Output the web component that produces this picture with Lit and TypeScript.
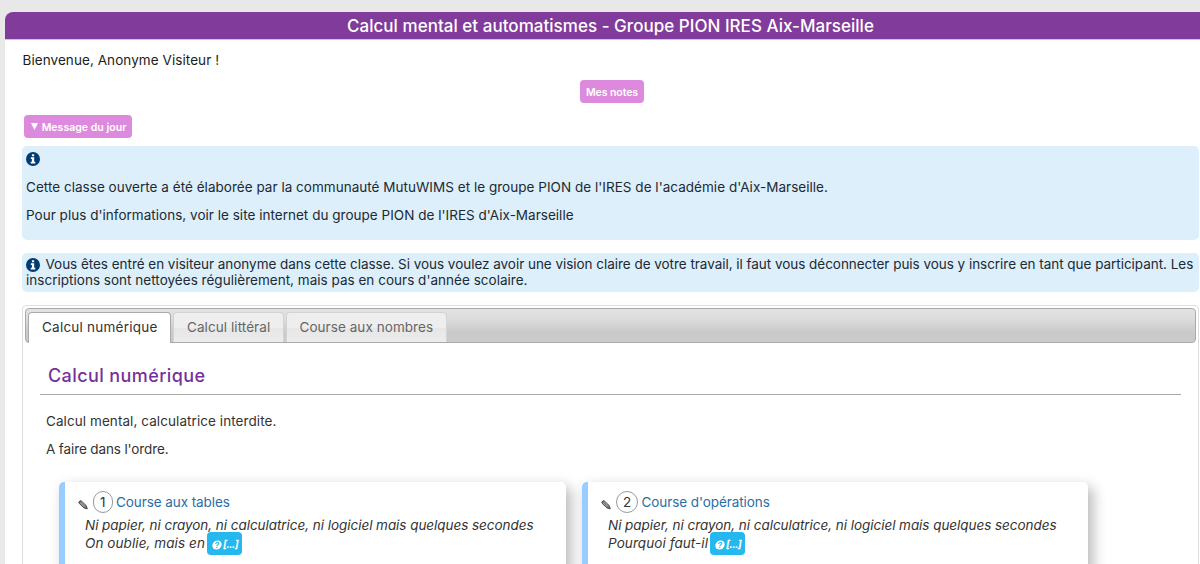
import { LitElement, html, css, svg } from "lit";

interface Exercise {
  num: number;
  title: string;
  line1: string;
  line2: string;
  tone: string;
}

const exercises: Exercise[] = [
  {
    num: 1,
    title: "Course aux tables",
    line1: "Ni papier, ni crayon, ni calculatrice, ni logiciel mais quelques secondes",
    line2: "On oublie, mais en",
    tone: "first",
  },
  {
    num: 2,
    title: "Course d'opérations",
    line1: "Ni papier, ni crayon, ni calculatrice, ni logiciel mais quelques secondes",
    line2: "Pourquoi faut-il",
    tone: "second",
  },
];

const infoIcon = html`<svg class="info" viewBox="0 0 14 14">
  <circle cx="7" cy="7" r="7" fill="#003c72"></circle>
  ${svg`<path fill="#fff" d="M5.9 2.2h2.3v2H5.9zM4.8 5.3h3.4v4.5h1.1v1.6H4.7V9.8h1.2V6.9H4.8z"/>`}
</svg>`;

const pencilIcon = html`<svg class="pencil" viewBox="0 0 10 10">
  <path d="M1.1 1.6 2.9.5 8.2 5.6 9.3 8.9 5.9 7.9.8 3z" fill="#777" stroke="#333" stroke-width=".8" stroke-linejoin="round"></path>
  <path d="M2 2.8 6.2 7M3.2 1.8 7.4 5.9" stroke="#ccc" stroke-width=".6" fill="none"></path>
</svg>`;

const questionIcon = html`<svg class="question" viewBox="0 0 10 10">
  <g transform="skewX(-8) translate(.7 0)">
    <circle cx="5" cy="5" r="4.6" fill="#fff"></circle>
    <path d="M3.5 4C3.5 2 6.7 2.1 6.5 3.8 6.4 4.8 5.1 4.7 5.1 5.9M5.1 6.7v1.2" fill="none" stroke="#25b8ee" stroke-width="1.2"></path>
  </g>
</svg>`;

class AppRoot extends LitElement {
  static styles = css`
    :host {
      display: block;
      box-sizing: border-box;
      height: 564px;
      overflow: hidden;
      padding: 12px 0 0 5px;
      background: #e8e8e8;
      color: #1c1c1c;
      font: 400 13.5px/16px Inter, "Open Sans", sans-serif;
    }
    * { box-sizing: border-box; }
    p { margin: 0; }
    .page { height: 560px; background: #fff; border-top-left-radius: 8px; }
    header {
      height: 27px;
      padding-left: 16px;
      background: #813b9a;
      box-shadow: 0 1px #ddb9e6;
      border-top-left-radius: 8px;
      color: #fff;
      font: 450 17px/28px Inter, sans-serif;
      letter-spacing: 0.03px;
      text-align: center;
      white-space: nowrap;
    }
    main { padding: 13px 1px 0 17px; }
    .welcome { padding-left: 0.5px; letter-spacing: 0.07px; }
    .btn {
      display: flex;
      align-items: center;
      justify-content: center;
      height: 23px;
      border-radius: 4px;
      background: #dd8ade;
      color: #fff;
      font: 600 10.5px/23px Inter, sans-serif;
    }
    .btn span { padding-top: 1px; }
    .notes { width: 64px; margin: 12px 0 0 558px; letter-spacing: -0.06px; }
    .message { width: 108px; margin: 12px 0 8px 2px; padding-left: 1px; gap: 4px; letter-spacing: 0.03px; }
    .tri { width: 7px; height: 7px; }
    .box { border-radius: 5px; background: #ddeffb; padding: 4px; color: #202a33; }
    .intro { height: 94px; padding-top: 6px; }
    .intro p { letter-spacing: 0.027px; }
    .intro .lead { margin-top: 13px; }
    .intro .more { margin-top: 12px; letter-spacing: 0.022px; }
    .info { display: block; width: 14px; height: 14px; flex: none; }
    .visitor { height: 39px; margin-top: 13px; padding-top: 3px; white-space: nowrap; }
    .row { display: flex; gap: 5.5px; letter-spacing: -0.035px; line-height: 17px; }
    .row .info { margin-top: 2px; }
    .rest { letter-spacing: 0.02px; line-height: 15px; }
    .tabs {
      height: 300px;
      margin-top: 13px;
      padding: 2px;
      border: 1px solid #dedede;
      border-radius: 4px;
      color: #333;
    }
    nav {
      display: flex;
      gap: 2px;
      height: 35px;
      padding: 3px 2px 0;
      border: 1px solid #aaa;
      border-radius: 4px;
      background: linear-gradient(#e3e3e3, #dcdcdc 30%, #cacaca 70%, #cacaca);
    }
    .tab {
      height: 30px;
      border: 1px solid #d3d3d3;
      border-bottom: 0;
      border-radius: 4px 4px 0 0;
      background: linear-gradient(#eee 50%, #e6e6e6 52%, #ececec);
      color: #666;
      line-height: 29px;
      padding-left: 13px;
      white-space: nowrap;
    }
    .active { width: 143px; height: 31px; border-color: #aaa; background: #fff; color: #333; letter-spacing: 0.23px; }
    .literal { width: 111px; letter-spacing: 0.07px; }
    .numbers { width: 160.5px; padding-left: 12.5px; letter-spacing: 0.06px; }
    .panel { padding: 19px 15px 0; }
    h2 {
      height: 33px;
      margin: 0;
      padding-left: 8px;
      border-bottom: 1px solid #aaa;
      color: #76309a;
      font: 450 18px/27px Inter, sans-serif;
      letter-spacing: 0.4px;
    }
    .note { margin: 18px 0 0 6px; letter-spacing: 0.075px; }
    .order { margin: 12px 0 0 6px; letter-spacing: -0.12px; }
    .cards { display: flex; gap: 16px; margin: 25px 0 0 19px; }
    .card {
      width: 507px;
      height: 120px;
      padding: 9px 0 0 20px;
      border-left: 6px solid #99ccff;
      border-radius: 5px;
      background: #fff;
      box-shadow: 5px 5px 14px rgba(0, 0, 0, 0.28);
    }
    .card.second { width: 506px; }
    .head { display: flex; align-items: center; height: 22px; color: #2a6ea5; letter-spacing: -0.08px; }
    .pencil { width: 10px; height: 10px; margin: 5px 5px 0 -7px; }
    .num {
      height: 22px;
      margin-right: 3.5px;
      border: 1px solid #999;
      border-radius: 11px;
      color: #333;
      line-height: 20px;
      text-align: center;
    }
    .first .num { width: 19.5px; }
    .second .num { width: 22px; }
    .desc { font-style: italic; line-height: 18px; letter-spacing: -0.046px; margin-top: 3px; white-space: nowrap; }
    .end { display: flex; font-style: italic; height: 18px; line-height: 18px; letter-spacing: 0.08px; white-space: nowrap; }
    .second .end { letter-spacing: 0.08px; }
    .hint {
      display: flex;
      align-items: center;
      justify-content: center;
      gap: 1px;
      width: 35px;
      height: 23px;
      margin: -2px 0 0 2px;
      border-radius: 4px;
      background: #25b8ee;
      color: #fff;
      font: italic 700 10.5px/23px Inter, sans-serif;
      letter-spacing: -0.7px;
    }
    .hint span { padding: 1px 0 0 0; }
    .question { width: 10px; height: 10px; margin: 2px 0 0 1px; }
  `;

  render() {
    return html`<div class="page">
      <header>Calcul mental et automatismes - Groupe PION IRES Aix-Marseille</header>
      <main>
        <p class="welcome">Bienvenue, Anonyme Visiteur !</p>
        <div class="btn notes"><span>Mes notes</span></div>
        <div class="btn message">
          <svg class="tri" viewBox="0 0 7 7"><path d="M0 0h7L3.5 7z" fill="#fff"></path></svg>
          <span>Message du jour</span>
        </div>
        <section class="box intro">
          ${infoIcon}
          <p class="lead">Cette classe ouverte a été élaborée par la communauté MutuWIMS et le groupe PION de l'IRES de l'académie d'Aix-Marseille.</p>
          <p class="more">Pour plus d'informations, voir le site internet du groupe PION de l'IRES d'Aix-Marseille</p>
        </section>
        <section class="box visitor">
          <div class="row">${infoIcon}<span>Vous êtes entré en visiteur anonyme dans cette classe. Si vous voulez avoir une vision claire de votre travail, il faut vous déconnecter puis vous y inscrire en tant que participant. Les</span></div>
          <div class="rest">inscriptions sont nettoyées régulièrement, mais pas en cours d'année scolaire.</div>
        </section>
        <section class="tabs">
          <nav>
            <div class="tab active">Calcul numérique</div>
            <div class="tab literal">Calcul littéral</div>
            <div class="tab numbers">Course aux nombres</div>
          </nav>
          <div class="panel">
            <h2>Calcul numérique</h2>
            <p class="note">Calcul mental, calculatrice interdite.</p>
            <p class="order">A faire dans l'ordre.</p>
            <div class="cards">
              ${exercises.map(
                (e) => html`<article class="card ${e.tone}">
                  <div class="head">${pencilIcon}<span class="num">${e.num}</span><span>${e.title}</span></div>
                  <p class="desc">${e.line1}</p>
                  <div class="end"><span>${e.line2}</span><span class="hint">${questionIcon}<span>[...]</span></span></div>
                </article>`
              )}
            </div>
          </div>
        </section>
      </main>
    </div>`;
  }
}

customElements.define("app-root", AppRoot);
